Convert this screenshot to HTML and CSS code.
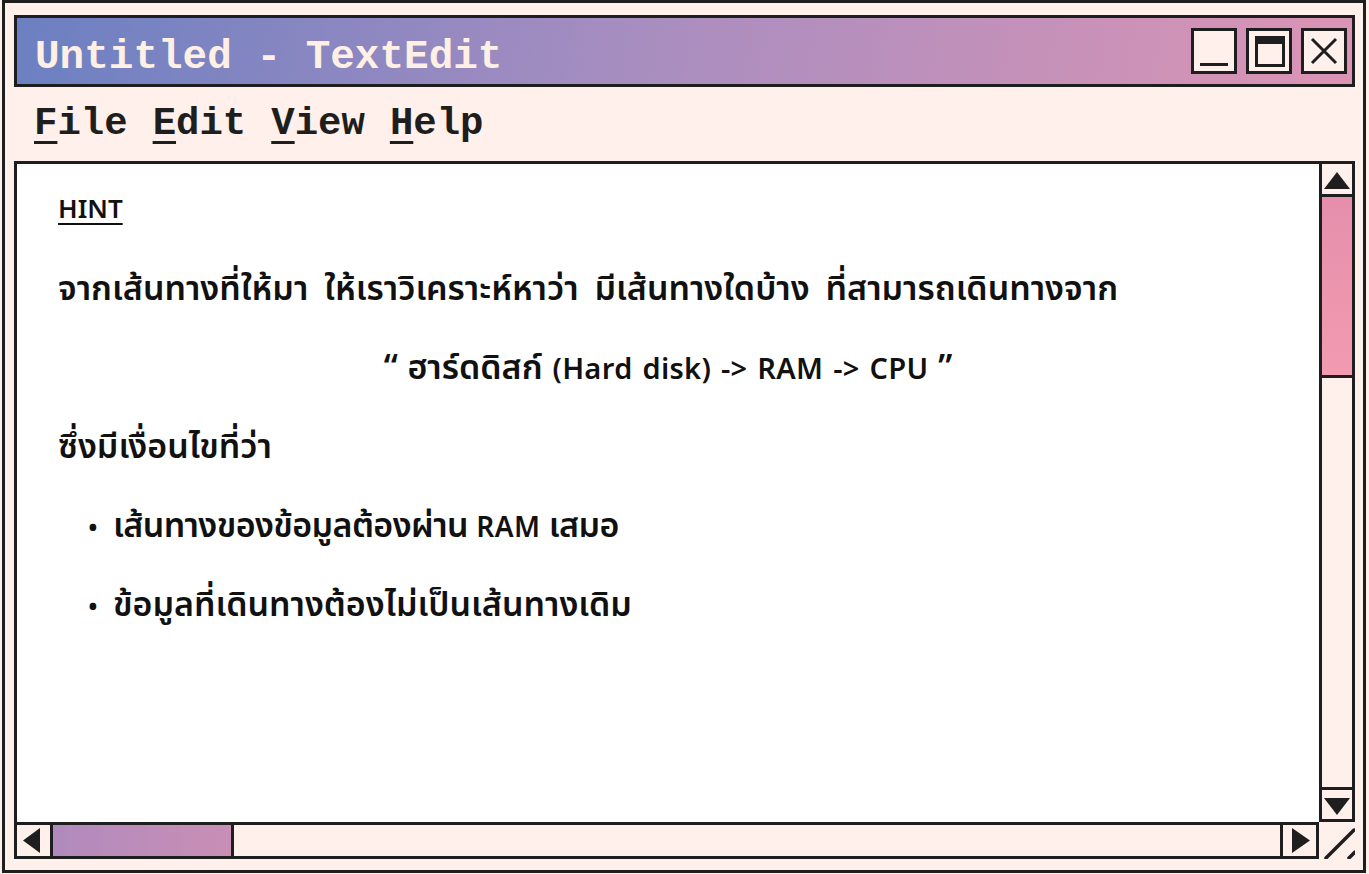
FILE: index.html
```html
<!DOCTYPE html>
<html lang="th">
<head>
<meta charset="utf-8">
<title>Untitled - TextEdit</title>
<link rel="stylesheet" href="styles.css">
</head>
<body>
<div class="window">
  <header class="titlebar">
    <h1 class="title">Untitled - TextEdit</h1>
    <div class="controls">
      <button class="ctl" aria-label="Minimize">
        <svg viewBox="0 0 40 40" width="40" height="40"><rect x="6" y="32" width="28" height="3" fill="#1e1e1e"/></svg>
      </button>
      <button class="ctl" aria-label="Maximize">
        <svg viewBox="0 0 40 40" width="40" height="40"><rect x="7.5" y="6.5" width="27" height="28" fill="none" stroke="#1e1e1e" stroke-width="3"/><rect x="6" y="5" width="30" height="8" fill="#1e1e1e"/></svg>
      </button>
      <button class="ctl" aria-label="Close">
        <svg viewBox="0 0 40 40" width="40" height="40"><path d="M8 8 L32 32 M32 8 L8 32" stroke="#1e1e1e" stroke-width="3" fill="none"/></svg>
      </button>
    </div>
  </header>
  <nav class="menu">
    <span class="menu-item"><u>F</u>ile</span>
    <span class="menu-item"><u>E</u>dit</span>
    <span class="menu-item"><u>V</u>iew</span>
    <span class="menu-item"><u>H</u>elp</span>
  </nav>
  <div class="frame">
    <main class="doc">
      <p class="hint"><span class="en" lang="en">HINT</span></p>
      <p class="wide">จากเส้นทางที่ให้มา ให้เราวิเคราะห์หาว่า มีเส้นทางใดบ้าง ที่สามารถเดินทางจาก</p>
      <p class="center">“ ฮาร์ดดิสก์ <span class="en" lang="en">(Hard disk) -&gt; RAM -&gt; CPU</span> ”</p>
      <p>ซึ่งมีเงื่อนไขที่ว่า</p>
      <ul class="list">
        <li class="tight">เส้นทางของข้อมูลต้องผ่าน <span class="en" lang="en">RAM</span> เสมอ</li>
        <li>ข้อมูลที่เดินทางต้องไม่เป็นเส้นทางเดิม</li>
      </ul>
    </main>
    <div class="vscroll">
      <div class="sbtn up"><svg viewBox="0 0 30 32" width="30" height="32"><polygon points="2,25 28,25 15,8" fill="#1e1e1e"/></svg></div>
      <div class="vthumb"></div>
      <div class="vtrack"></div>
      <div class="sbtn down"><svg viewBox="0 0 30 32" width="30" height="32"><polygon points="2,8 28,8 15,25" fill="#1e1e1e"/></svg></div>
    </div>
    <div class="hscroll">
      <div class="hbtn left"><svg viewBox="0 0 33 31" width="33" height="31"><polygon points="23,3 23,28 6,15.5" fill="#1e1e1e"/></svg></div>
      <div class="hthumb"></div>
      <div class="htrack"></div>
      <div class="hbtn right"><svg viewBox="0 0 33 31" width="33" height="31"><polygon points="9,3 9,28 27,15.5" fill="#1e1e1e"/></svg></div>
    </div>
    <div class="corner">
      <svg viewBox="0 0 36 37" width="36" height="37"><path d="M7 36 L35 8 M30 36 L36 30" stroke="#1e1e1e" stroke-width="3.5" fill="none" stroke-linecap="round"/></svg>
    </div>
  </div>
</div>
</body>
</html>
```
FILE: styles.css
```css
* { box-sizing: border-box; }
html, body { margin: 0; padding: 0; background: #fff0eb; }
body { width: 1369px; height: 874px; overflow: hidden; }

.window {
  margin: 0 3px 0 2px;
  height: 873px;
  border: 3px solid #1e1e1e;
  background: #fff0eb;
  padding: 12px 8px 11px 9px;
  display: flex;
  flex-direction: column;
}

.titlebar {
  height: 72px;
  border: 3px solid #1e1e1e;
  background: linear-gradient(100deg, #6b80c2 0%, #a68dc0 45%, #dc94b4 100%);
  display: flex;
  align-items: center;
  justify-content: space-between;
  padding: 0 5px 0 18px;
}
.title {
  margin: 11px 0 0;
  font-family: "Liberation Mono", "Courier New", monospace;
  font-weight: bold;
  font-size: 41px;
  color: #fff0e6;
}
.controls { display: flex; gap: 9px; }
.ctl {
  width: 46px;
  height: 46px;
  padding: 0;
  margin: 0;
  border: 3px solid #1e1e1e;
  background: #fff0eb;
  display: flex;
  align-items: center;
  justify-content: center;
}
.ctl svg { display: block; }

.menu {
  height: 74px;
  display: flex;
  align-items: center;
  gap: 25px;
  padding-left: 20px;
  font-family: "Liberation Mono", "Courier New", monospace;
  font-weight: bold;
  font-size: 39px;
  color: #1e1e1e;
}
.menu u {
  text-decoration-thickness: 3px;
  text-underline-offset: 7px;
}

.frame {
  flex: 1;
  display: grid;
  grid-template-columns: 1fr 36px;
  grid-template-rows: 1fr 37px;
  min-height: 0;
}

.doc {
  background: #fff;
  border-top: 3px solid #1e1e1e;
  border-left: 3px solid #1e1e1e;
  padding: 27px 41px 0 41px;
  font-family: "Noto Sans Thai", "Noto Sans", "DejaVu Sans", sans-serif;
  font-weight: 600;
  font-size: 34px;
  color: #111;
  overflow: hidden;
}
.doc p { margin: 0 0 39px; height: 40px; line-height: 40px; white-space: nowrap; }
.doc .wide { word-spacing: 7px; }
.doc .en { font-size: 29px; line-height: 20px; word-spacing: 2px; letter-spacing: 0.3px; }
.doc .hint .en { font-size: 26px; letter-spacing: 0; vertical-align: 3px; }
.doc .hint .en { text-decoration: underline; text-decoration-thickness: 2px; text-underline-offset: 5px; }
.doc .center { text-align: center; word-spacing: 1px; }
.list { list-style: none; margin: 0; padding: 0 0 0 30px; }
.list li { height: 40px; line-height: 40px; margin-bottom: 39px; display: flex; align-items: baseline; white-space: pre; }
.list li.tight { letter-spacing: -0.6px; }
.list li .en { font-size: 28px; letter-spacing: 0.5px; }
.list li::before { content: "•"; width: 25px; flex: none; font-size: 26px; letter-spacing: 0; }

.vscroll {
  border: 3px solid #1e1e1e;
  background: #fff0eb;
  display: flex;
  flex-direction: column;
}
.sbtn { height: 32px; flex: none; }
.sbtn svg { display: block; }
.sbtn.up { border-bottom: 3px solid #1e1e1e; height: 33px; }
.sbtn.down { border-top: 3px solid #1e1e1e; }
.vthumb {
  height: 181px;
  flex: none;
  background: linear-gradient(#e68fad, #f29aae);
  border-bottom: 3px solid #1e1e1e;
}
.vtrack { flex: 1; }

.hscroll {
  border: 3px solid #1e1e1e;
  background: #fff0eb;
  display: flex;
}
.hbtn { width: 36px; flex: none; }
.hbtn svg { display: block; }
.hbtn.left { border-right: 3px solid #1e1e1e; }
.hbtn.right { border-left: 3px solid #1e1e1e; }
.hthumb {
  width: 181px;
  flex: none;
  background: linear-gradient(90deg, #b08abd, #c98fb5);
  border-right: 3px solid #1e1e1e;
}
.htrack { flex: 1; }

.corner svg { display: block; }
```
